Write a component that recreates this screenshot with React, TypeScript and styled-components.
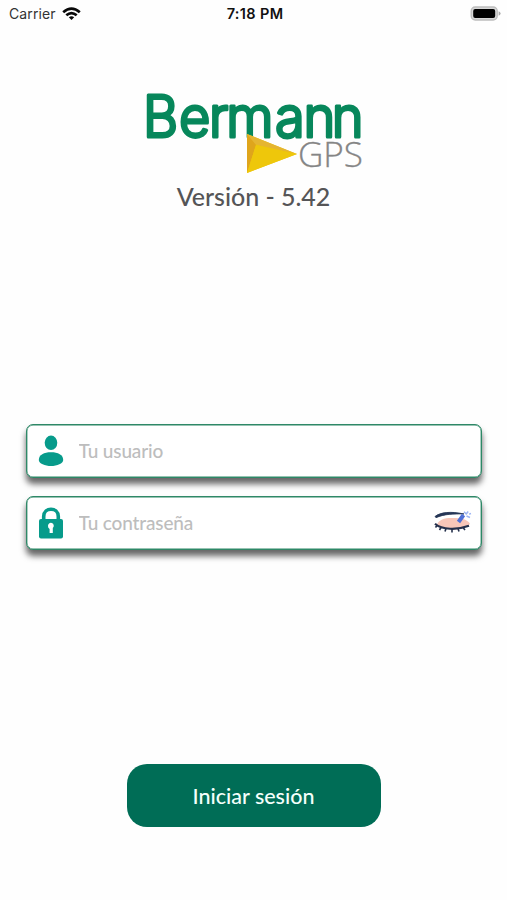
import React from "react";
import styled, { createGlobalStyle } from "styled-components";

const GlobalStyle = createGlobalStyle`
  * { box-sizing: border-box; }
  body { margin: 0; background: #fefefe; font-family: Lato, "Liberation Sans", sans-serif; }
`;

const Screen = styled.main`
  width: 507px;
  height: 900px;
  display: flex;
  flex-direction: column;
  align-items: center;
`;

const StatusBar = styled.header`
  width: 100%;
  height: 27px;
  padding: 0 6px 0 9px;
  display: grid;
  grid-template-columns: 1fr auto 1fr;
  align-items: center;
  font-family: Inter, sans-serif;
  color: #111;
`;

const Carrier = styled.div`
  display: flex;
  align-items: center;
  gap: 6px;
  font-size: 14px;
  letter-spacing: 0.1px;
  color: #333;
`;

const Clock = styled.time`
  font-size: 14.5px;
  font-weight: 600;
  letter-spacing: 0.35px;
`;

const BatterySlot = styled.div`
  display: flex;
  justify-content: flex-end;
`;

const Brand = styled.section`
  margin-top: 58px;
  display: flex;
  flex-direction: column;
  align-items: center;
`;

const LogoArt = styled.svg`
  display: block;
  overflow: visible;
`;

const Version = styled.p`
  margin: 7px 0 0;
  height: 32px;
  line-height: 32px;
  font-size: 25px;
  font-weight: 500;
  letter-spacing: -0.02px;
  color: #555557;
`;

const Form = styled.form`
  flex: 1;
  width: 456px;
  margin-top: 212px;
  display: flex;
  flex-direction: column;
  align-items: center;
  gap: 18px;
`;

const Field = styled.label`
  width: 100%;
  height: 54px;
  padding: 0 9px 0 11px;
  display: flex;
  align-items: center;
  background: #fff;
  border: 1px solid #2e8867;
  border-radius: 7px;
  box-shadow: inset 0 0 0 0.4px #2e8867, 0 6px 6px rgba(0, 0, 0, 0.6);
`;

const Input = styled.input`
  flex: 1;
  min-width: 0;
  margin-left: 15px;
  padding: 0 0 1px;
  border: 0;
  outline: 0;
  background: transparent;
  font: 500 19px Lato, sans-serif;
  letter-spacing: -0.15px;
  color: #444;
  &::placeholder { color: #bdbdbd; opacity: 1; }
`;

const Submit = styled.button`
  width: 254px;
  height: 63px;
  margin-top: 196px;
  padding: 0;
  border: 0;
  border-radius: 20px;
  background: #006d56;
  color: #f4fffb;
  font: 500 21.5px Lato, sans-serif;
  letter-spacing: 0;
`;

const WifiIcon = () => (
  <svg width="19" height="14" viewBox="0 0 19 14" fill="none" stroke="#080808" strokeWidth="2.7">
    <path d="M1.2 5.2Q9.5-2 17.8 5.2" />
    <path d="M4.3 8.3Q9.5 3.8 14.7 8.3" />
    <path d="M6.8 10.2Q9.5 8.2 12.2 10.2L9.5 13Z" fill="#080808" stroke="none" />
  </svg>
);

const BatteryIcon = () => (
  <svg width="31" height="15" viewBox="0 0 31 15">
    <rect x="1.2" y="1" width="26" height="13" rx="4" fill="#d8d8d8" stroke="#bdbdbd" strokeWidth="1.4" />
    <rect x="3.2" y="3" width="22" height="9" rx="2" fill="#000" />
    <path d="M28.6 5.2Q30.6 6 30.6 7.5T28.6 9.8Z" fill="#aaa" />
  </svg>
);

const Logo = () => (
  <LogoArt width="220" height="88" viewBox="0 0 220 88" role="img" aria-label="Bermann GPS">
    <text transform="scale(.95 1)" y="51.5" x="-1 36.8 68.3 86.5 138 168 197.7" fontFamily="Inter" fontSize="57" fontWeight="300" fill="#07875b" stroke="#07875b" strokeWidth="3" strokeLinejoin="round">Bermann</text>
    <path d="M103 49L153 69L103 88Z" fill="#edc40d" />
    <path d="M103 49L153 69L109 59Z" fill="#e5b531" />
    <path d="M103 49L112 60L103 88Z" fill="#dfa51c" />
    <path d="M112 60L103 88L153 69Z" fill="#eec70b" />
    <text x="154" y="81.5" fontFamily="Open Sans" fontSize="35" fontWeight="300" fill="#858585" stroke="#858585" strokeWidth=".3" textLength="65" lengthAdjust="spacingAndGlyphs">GPS</text>
  </LogoArt>
);

const UserIcon = () => (
  <svg width="26" height="34" viewBox="0 0 26 34" fill="#079b8b">
    <ellipse cx="13" cy="8.8" rx="6.3" ry="7.3" />
    <path d="M.8 26C.8 20.8 6 18.3 13 18.3S25.2 20.8 25.2 26C25.2 29.6 19 32 13 32S.8 29.6 .8 26Z" />
  </svg>
);

const LockIcon = () => (
  <svg width="26" height="34" viewBox="0 0 26 34">
    <path d="M5.7 15V10.5C5.7 .8 20.3 .8 20.3 10.5V15" fill="none" stroke="#079b8b" strokeWidth="3.6" />
    <rect x="1" y="13" width="24" height="19.5" rx="2" fill="#079b8b" />
    <path d="M10 20.1a2.9 2.9 0 1 1 4.8 1.8v5.2H11.6V23A3 3 0 0 1 10 20.1Z" fill="#fff" />
  </svg>
);

const ClosedEyeIcon = () => (
  <svg width="38" height="26" viewBox="0 0 38 25">
    <path d="M3 14C5 8.5 12 7 20 7.5C28 7 35 10 36 13.5L33 16C26 20 12 21 3 14Z" fill="#f8c6b9" />
    <path d="M1 6C6 1.8 17 .5 30 3.5C20 3.2 10 3.5 2 7.2Z" fill="#263656" stroke="#263656" strokeWidth=".8" />
    <path d="M1 13.3C8 19.5 23 19.7 35 15.3" fill="none" stroke="#25304c" strokeWidth="2.2" />
    <path d="M3 15L1.5 17M7 17L5.5 19.5M12 18L11 21M18 18.5V22M24 18L25 21M29 17L31 19.5" stroke="#25304c" strokeWidth="1.6" />
    <path d="M24.5 11.5L29.5 4.5" stroke="#4f70d8" strokeWidth="4" />
    <path d="M30 1.3L32 3.2M34.2 1L31.8 4M32.5 5.5L36 7M35 3.6L37 3" stroke="#9db5f4" strokeWidth="1.5" />
  </svg>
);

export default function App() {
  return (
    <Screen>
      <GlobalStyle />
      <StatusBar>
        <Carrier>Carrier <WifiIcon /></Carrier>
        <Clock>7:18 PM</Clock>
        <BatterySlot><BatteryIcon /></BatterySlot>
      </StatusBar>
      <Brand>
        <Logo />
        <Version>Versión - 5.42</Version>
      </Brand>
      <Form onSubmit={(event) => event.preventDefault()}>
        <Field>
          <UserIcon />
          <Input placeholder="Tu usuario" aria-label="Tu usuario" />
        </Field>
        <Field>
          <LockIcon />
          <Input type="password" placeholder="Tu contraseña" aria-label="Tu contraseña" />
          <ClosedEyeIcon />
        </Field>
        <Submit>Iniciar sesión</Submit>
      </Form>
    </Screen>
  );
}
